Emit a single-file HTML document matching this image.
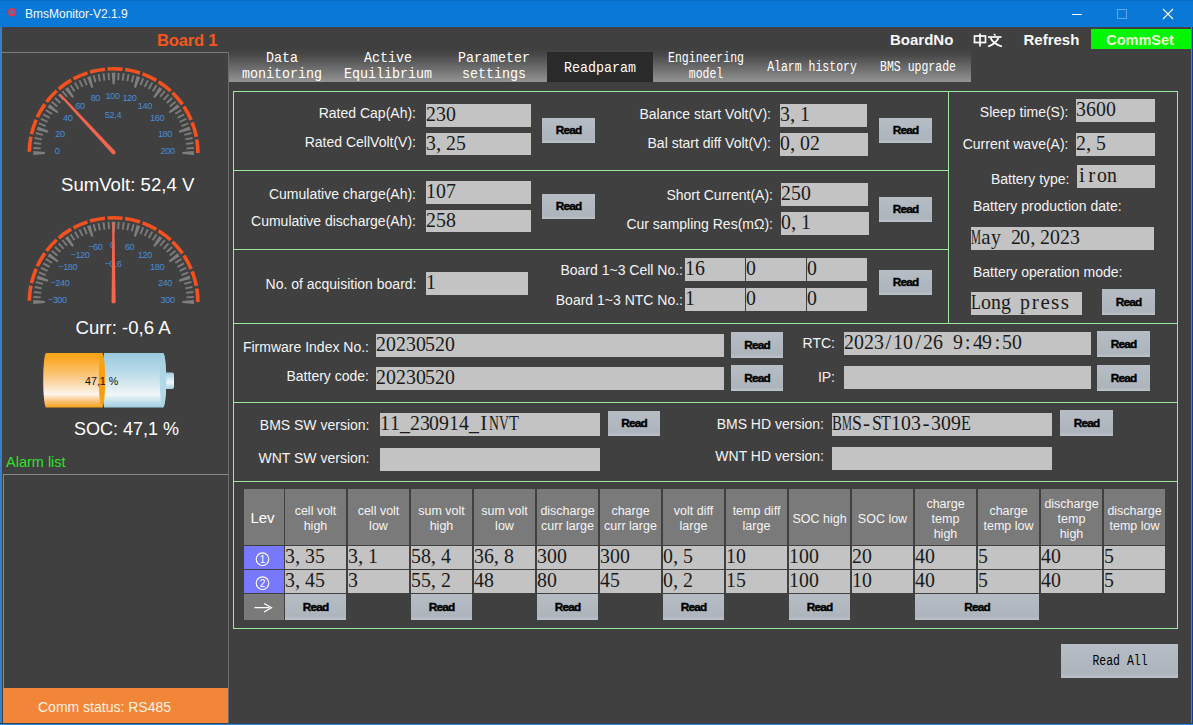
<!DOCTYPE html>
<html><head><meta charset="utf-8"><style>
html,body{margin:0;padding:0;}
body{width:1193px;height:725px;background:#404040;position:relative;overflow:hidden;font-family:'Liberation Sans', sans-serif;}
body>div,body>svg{position:absolute;}
</style></head><body>
<div style="left:0px;top:0px;width:1193px;height:27px;background:#0a78d6;"></div><div style="left:0px;top:0px;width:1193px;height:1px;background:#086cc4;"></div><svg style="left:0;top:0" width="30" height="27"><circle cx="12.1" cy="12.2" r="3.2" fill="#5070b8" stroke="#dc3848" stroke-width="2.1"/></svg><div style="left:25px;top:8.04px;font-size:12px;line-height:12px;font-family:'Liberation Sans', sans-serif;color:#f4f8ff;font-weight:normal;white-space:pre;">BmsMonitor-V2.1.9</div><svg style="left:1060px;top:0" width="130" height="27"><line x1="12" y1="14.5" x2="22" y2="14.5" stroke="#fff" stroke-width="1"/><rect x="57.5" y="9.5" width="9" height="9" fill="none" stroke="#5ea6ec" stroke-width="1"/><path d="M103 9 L113 19 M113 9 L103 19" stroke="#fff" stroke-width="1.1"/></svg><div style="left:0px;top:27px;width:2px;height:698px;background:#3a7fc4;"></div><div style="left:1191px;top:27px;width:1px;height:698px;background:#3f80cc;"></div><div style="left:1192px;top:27px;width:1px;height:698px;background:#0b3d9c;"></div><div style="left:0px;top:723px;width:1193px;height:1px;background:#30445c;"></div><div style="left:0px;top:724px;width:1193px;height:1px;background:#2f86d8;"></div><div style="left:157px;top:33.45px;font-size:16.6px;line-height:16.6px;font-family:'Liberation Sans', sans-serif;color:#f5561e;font-weight:bold;white-space:pre;letter-spacing:-0.2px;">Board 1</div><div style="left:2px;top:52px;width:226px;height:1px;background:#7c7c7c;"></div><div style="left:228px;top:52px;width:1px;height:671px;background:#6c6c6c;"></div><svg style="left:0;top:0" width="229" height="450"><path d="M29.299999999999997 153 A84.3 84.3 0 0 1 197.89999999999998 153" fill="none" stroke="#f4511e" stroke-width="3.6" stroke-dasharray="15.23 2.6" stroke-dashoffset="-1.2"/><polygon points="33.32,151.10 33.32,154.90 44.81,154.00 44.81,152.00" fill="#7e7e7e"/><line x1="40.74" y1="148.42" x2="33.46" y2="147.96" stroke="#7c7c7c" stroke-width="1.9"/><line x1="41.18" y1="143.85" x2="33.93" y2="142.94" stroke="#7c7c7c" stroke-width="1.9"/><line x1="41.89" y1="139.32" x2="34.72" y2="137.95" stroke="#7c7c7c" stroke-width="1.9"/><line x1="42.89" y1="134.85" x2="35.82" y2="133.03" stroke="#7c7c7c" stroke-width="1.9"/><polygon points="37.84,126.39 36.66,130.00 47.87,132.69 48.48,130.79" fill="#7e7e7e"/><line x1="45.73" y1="126.13" x2="38.94" y2="123.44" stroke="#7c7c7c" stroke-width="1.9"/><line x1="47.55" y1="121.92" x2="40.94" y2="118.81" stroke="#7c7c7c" stroke-width="1.9"/><line x1="49.63" y1="117.83" x2="43.23" y2="114.32" stroke="#7c7c7c" stroke-width="1.9"/><line x1="51.96" y1="113.88" x2="45.80" y2="109.97" stroke="#7c7c7c" stroke-width="1.9"/><polygon points="49.77,104.28 47.54,107.35 57.36,113.37 58.53,111.76" fill="#7e7e7e"/><line x1="57.35" y1="106.47" x2="51.73" y2="101.81" stroke="#7c7c7c" stroke-width="1.9"/><line x1="60.39" y1="103.03" x2="55.06" y2="98.03" stroke="#7c7c7c" stroke-width="1.9"/><line x1="63.63" y1="99.79" x2="58.63" y2="94.46" stroke="#7c7c7c" stroke-width="1.9"/><line x1="67.07" y1="96.75" x2="62.41" y2="91.13" stroke="#7c7c7c" stroke-width="1.9"/><polygon points="67.95,86.94 64.88,89.17 72.36,97.93 73.97,96.76" fill="#7e7e7e"/><line x1="74.48" y1="91.36" x2="70.57" y2="85.20" stroke="#7c7c7c" stroke-width="1.9"/><line x1="78.43" y1="89.03" x2="74.92" y2="82.63" stroke="#7c7c7c" stroke-width="1.9"/><line x1="82.52" y1="86.95" x2="79.41" y2="80.34" stroke="#7c7c7c" stroke-width="1.9"/><line x1="86.73" y1="85.13" x2="84.04" y2="78.34" stroke="#7c7c7c" stroke-width="1.9"/><polygon points="90.60,76.06 86.99,77.24 91.39,87.88 93.29,87.27" fill="#7e7e7e"/><line x1="95.45" y1="82.29" x2="93.63" y2="75.22" stroke="#7c7c7c" stroke-width="1.9"/><line x1="99.92" y1="81.29" x2="98.55" y2="74.12" stroke="#7c7c7c" stroke-width="1.9"/><line x1="104.45" y1="80.58" x2="103.54" y2="73.33" stroke="#7c7c7c" stroke-width="1.9"/><line x1="109.02" y1="80.14" x2="108.56" y2="72.86" stroke="#7c7c7c" stroke-width="1.9"/><polygon points="115.50,72.72 111.70,72.72 112.60,84.21 114.60,84.21" fill="#7e7e7e"/><line x1="118.18" y1="80.14" x2="118.64" y2="72.86" stroke="#7c7c7c" stroke-width="1.9"/><line x1="122.75" y1="80.58" x2="123.66" y2="73.33" stroke="#7c7c7c" stroke-width="1.9"/><line x1="127.28" y1="81.29" x2="128.65" y2="74.12" stroke="#7c7c7c" stroke-width="1.9"/><line x1="131.75" y1="82.29" x2="133.57" y2="75.22" stroke="#7c7c7c" stroke-width="1.9"/><polygon points="140.21,77.24 136.60,76.06 133.91,87.27 135.81,87.88" fill="#7e7e7e"/><line x1="140.47" y1="85.13" x2="143.16" y2="78.34" stroke="#7c7c7c" stroke-width="1.9"/><line x1="144.68" y1="86.95" x2="147.79" y2="80.34" stroke="#7c7c7c" stroke-width="1.9"/><line x1="148.77" y1="89.03" x2="152.28" y2="82.63" stroke="#7c7c7c" stroke-width="1.9"/><line x1="152.72" y1="91.36" x2="156.63" y2="85.20" stroke="#7c7c7c" stroke-width="1.9"/><polygon points="162.32,89.17 159.25,86.94 153.23,96.76 154.84,97.93" fill="#7e7e7e"/><line x1="160.13" y1="96.75" x2="164.79" y2="91.13" stroke="#7c7c7c" stroke-width="1.9"/><line x1="163.57" y1="99.79" x2="168.57" y2="94.46" stroke="#7c7c7c" stroke-width="1.9"/><line x1="166.81" y1="103.03" x2="172.14" y2="98.03" stroke="#7c7c7c" stroke-width="1.9"/><line x1="169.85" y1="106.47" x2="175.47" y2="101.81" stroke="#7c7c7c" stroke-width="1.9"/><polygon points="179.66,107.35 177.43,104.28 168.67,111.76 169.84,113.37" fill="#7e7e7e"/><line x1="175.24" y1="113.88" x2="181.40" y2="109.97" stroke="#7c7c7c" stroke-width="1.9"/><line x1="177.57" y1="117.83" x2="183.97" y2="114.32" stroke="#7c7c7c" stroke-width="1.9"/><line x1="179.65" y1="121.92" x2="186.26" y2="118.81" stroke="#7c7c7c" stroke-width="1.9"/><line x1="181.47" y1="126.13" x2="188.26" y2="123.44" stroke="#7c7c7c" stroke-width="1.9"/><polygon points="190.54,130.00 189.36,126.39 178.72,130.79 179.33,132.69" fill="#7e7e7e"/><line x1="184.31" y1="134.85" x2="191.38" y2="133.03" stroke="#7c7c7c" stroke-width="1.9"/><line x1="185.31" y1="139.32" x2="192.48" y2="137.95" stroke="#7c7c7c" stroke-width="1.9"/><line x1="186.02" y1="143.85" x2="193.27" y2="142.94" stroke="#7c7c7c" stroke-width="1.9"/><line x1="186.46" y1="148.42" x2="193.74" y2="147.96" stroke="#7c7c7c" stroke-width="1.9"/><polygon points="193.88,154.90 193.88,151.10 182.39,152.00 182.39,154.00" fill="#7e7e7e"/><text x="57.20" y="153.80" font-size="9.2" letter-spacing="-0.45" text-anchor="middle" fill="#4a8cd8" font-family="'Liberation Sans', sans-serif">0</text><text x="59.90" y="136.74" font-size="9.2" letter-spacing="-0.45" text-anchor="middle" fill="#4a8cd8" font-family="'Liberation Sans', sans-serif">20</text><text x="67.74" y="121.35" font-size="9.2" letter-spacing="-0.45" text-anchor="middle" fill="#4a8cd8" font-family="'Liberation Sans', sans-serif">40</text><text x="79.95" y="109.14" font-size="9.2" letter-spacing="-0.45" text-anchor="middle" fill="#4a8cd8" font-family="'Liberation Sans', sans-serif">60</text><text x="95.34" y="101.30" font-size="9.2" letter-spacing="-0.45" text-anchor="middle" fill="#4a8cd8" font-family="'Liberation Sans', sans-serif">80</text><text x="112.40" y="98.60" font-size="9.2" letter-spacing="-0.45" text-anchor="middle" fill="#4a8cd8" font-family="'Liberation Sans', sans-serif">100</text><text x="129.46" y="101.30" font-size="9.2" letter-spacing="-0.45" text-anchor="middle" fill="#4a8cd8" font-family="'Liberation Sans', sans-serif">120</text><text x="144.85" y="109.14" font-size="9.2" letter-spacing="-0.45" text-anchor="middle" fill="#4a8cd8" font-family="'Liberation Sans', sans-serif">140</text><text x="157.06" y="121.35" font-size="9.2" letter-spacing="-0.45" text-anchor="middle" fill="#4a8cd8" font-family="'Liberation Sans', sans-serif">160</text><text x="164.90" y="136.74" font-size="9.2" letter-spacing="-0.45" text-anchor="middle" fill="#4a8cd8" font-family="'Liberation Sans', sans-serif">180</text><text x="167.60" y="153.80" font-size="9.2" letter-spacing="-0.45" text-anchor="middle" fill="#4a8cd8" font-family="'Liberation Sans', sans-serif">200</text><text x="113.0" y="117.70" font-size="9.2" letter-spacing="-0.45" text-anchor="middle" fill="#4a8cd8" font-family="'Liberation Sans', sans-serif">52,&#8202;4</text><polygon points="112.13,153.76 59.15,95.15 60.62,93.79 115.07,151.04" fill="#f2654e"/><circle cx="113.6" cy="152.4" r="2.0" fill="#f2654e"/><path d="M29.299999999999997 302 A84.3 84.3 0 0 1 197.89999999999998 302" fill="none" stroke="#f4511e" stroke-width="3.6" stroke-dasharray="15.23 2.6" stroke-dashoffset="-1.2"/><polygon points="33.32,300.10 33.32,303.90 44.81,303.00 44.81,301.00" fill="#7e7e7e"/><line x1="40.74" y1="297.42" x2="33.46" y2="296.96" stroke="#7c7c7c" stroke-width="1.9"/><line x1="41.18" y1="292.85" x2="33.93" y2="291.94" stroke="#7c7c7c" stroke-width="1.9"/><line x1="41.89" y1="288.32" x2="34.72" y2="286.95" stroke="#7c7c7c" stroke-width="1.9"/><line x1="42.89" y1="283.85" x2="35.82" y2="282.03" stroke="#7c7c7c" stroke-width="1.9"/><polygon points="37.84,275.39 36.66,279.00 47.87,281.69 48.48,279.79" fill="#7e7e7e"/><line x1="45.73" y1="275.13" x2="38.94" y2="272.44" stroke="#7c7c7c" stroke-width="1.9"/><line x1="47.55" y1="270.92" x2="40.94" y2="267.81" stroke="#7c7c7c" stroke-width="1.9"/><line x1="49.63" y1="266.83" x2="43.23" y2="263.32" stroke="#7c7c7c" stroke-width="1.9"/><line x1="51.96" y1="262.88" x2="45.80" y2="258.97" stroke="#7c7c7c" stroke-width="1.9"/><polygon points="49.77,253.28 47.54,256.35 57.36,262.37 58.53,260.76" fill="#7e7e7e"/><line x1="57.35" y1="255.47" x2="51.73" y2="250.81" stroke="#7c7c7c" stroke-width="1.9"/><line x1="60.39" y1="252.03" x2="55.06" y2="247.03" stroke="#7c7c7c" stroke-width="1.9"/><line x1="63.63" y1="248.79" x2="58.63" y2="243.46" stroke="#7c7c7c" stroke-width="1.9"/><line x1="67.07" y1="245.75" x2="62.41" y2="240.13" stroke="#7c7c7c" stroke-width="1.9"/><polygon points="67.95,235.94 64.88,238.17 72.36,246.93 73.97,245.76" fill="#7e7e7e"/><line x1="74.48" y1="240.36" x2="70.57" y2="234.20" stroke="#7c7c7c" stroke-width="1.9"/><line x1="78.43" y1="238.03" x2="74.92" y2="231.63" stroke="#7c7c7c" stroke-width="1.9"/><line x1="82.52" y1="235.95" x2="79.41" y2="229.34" stroke="#7c7c7c" stroke-width="1.9"/><line x1="86.73" y1="234.13" x2="84.04" y2="227.34" stroke="#7c7c7c" stroke-width="1.9"/><polygon points="90.60,225.06 86.99,226.24 91.39,236.88 93.29,236.27" fill="#7e7e7e"/><line x1="95.45" y1="231.29" x2="93.63" y2="224.22" stroke="#7c7c7c" stroke-width="1.9"/><line x1="99.92" y1="230.29" x2="98.55" y2="223.12" stroke="#7c7c7c" stroke-width="1.9"/><line x1="104.45" y1="229.58" x2="103.54" y2="222.33" stroke="#7c7c7c" stroke-width="1.9"/><line x1="109.02" y1="229.14" x2="108.56" y2="221.86" stroke="#7c7c7c" stroke-width="1.9"/><polygon points="115.50,221.72 111.70,221.72 112.60,233.21 114.60,233.21" fill="#7e7e7e"/><line x1="118.18" y1="229.14" x2="118.64" y2="221.86" stroke="#7c7c7c" stroke-width="1.9"/><line x1="122.75" y1="229.58" x2="123.66" y2="222.33" stroke="#7c7c7c" stroke-width="1.9"/><line x1="127.28" y1="230.29" x2="128.65" y2="223.12" stroke="#7c7c7c" stroke-width="1.9"/><line x1="131.75" y1="231.29" x2="133.57" y2="224.22" stroke="#7c7c7c" stroke-width="1.9"/><polygon points="140.21,226.24 136.60,225.06 133.91,236.27 135.81,236.88" fill="#7e7e7e"/><line x1="140.47" y1="234.13" x2="143.16" y2="227.34" stroke="#7c7c7c" stroke-width="1.9"/><line x1="144.68" y1="235.95" x2="147.79" y2="229.34" stroke="#7c7c7c" stroke-width="1.9"/><line x1="148.77" y1="238.03" x2="152.28" y2="231.63" stroke="#7c7c7c" stroke-width="1.9"/><line x1="152.72" y1="240.36" x2="156.63" y2="234.20" stroke="#7c7c7c" stroke-width="1.9"/><polygon points="162.32,238.17 159.25,235.94 153.23,245.76 154.84,246.93" fill="#7e7e7e"/><line x1="160.13" y1="245.75" x2="164.79" y2="240.13" stroke="#7c7c7c" stroke-width="1.9"/><line x1="163.57" y1="248.79" x2="168.57" y2="243.46" stroke="#7c7c7c" stroke-width="1.9"/><line x1="166.81" y1="252.03" x2="172.14" y2="247.03" stroke="#7c7c7c" stroke-width="1.9"/><line x1="169.85" y1="255.47" x2="175.47" y2="250.81" stroke="#7c7c7c" stroke-width="1.9"/><polygon points="179.66,256.35 177.43,253.28 168.67,260.76 169.84,262.37" fill="#7e7e7e"/><line x1="175.24" y1="262.88" x2="181.40" y2="258.97" stroke="#7c7c7c" stroke-width="1.9"/><line x1="177.57" y1="266.83" x2="183.97" y2="263.32" stroke="#7c7c7c" stroke-width="1.9"/><line x1="179.65" y1="270.92" x2="186.26" y2="267.81" stroke="#7c7c7c" stroke-width="1.9"/><line x1="181.47" y1="275.13" x2="188.26" y2="272.44" stroke="#7c7c7c" stroke-width="1.9"/><polygon points="190.54,279.00 189.36,275.39 178.72,279.79 179.33,281.69" fill="#7e7e7e"/><line x1="184.31" y1="283.85" x2="191.38" y2="282.03" stroke="#7c7c7c" stroke-width="1.9"/><line x1="185.31" y1="288.32" x2="192.48" y2="286.95" stroke="#7c7c7c" stroke-width="1.9"/><line x1="186.02" y1="292.85" x2="193.27" y2="291.94" stroke="#7c7c7c" stroke-width="1.9"/><line x1="186.46" y1="297.42" x2="193.74" y2="296.96" stroke="#7c7c7c" stroke-width="1.9"/><polygon points="193.88,303.90 193.88,300.10 182.39,301.00 182.39,303.00" fill="#7e7e7e"/><text x="57.20" y="302.80" font-size="9.2" letter-spacing="-0.45" text-anchor="middle" fill="#4a8cd8" font-family="'Liberation Sans', sans-serif">&#8722;300</text><text x="59.90" y="285.74" font-size="9.2" letter-spacing="-0.45" text-anchor="middle" fill="#4a8cd8" font-family="'Liberation Sans', sans-serif">&#8722;240</text><text x="67.74" y="270.35" font-size="9.2" letter-spacing="-0.45" text-anchor="middle" fill="#4a8cd8" font-family="'Liberation Sans', sans-serif">&#8722;180</text><text x="79.95" y="258.14" font-size="9.2" letter-spacing="-0.45" text-anchor="middle" fill="#4a8cd8" font-family="'Liberation Sans', sans-serif">&#8722;120</text><text x="95.34" y="250.30" font-size="9.2" letter-spacing="-0.45" text-anchor="middle" fill="#4a8cd8" font-family="'Liberation Sans', sans-serif">&#8722;60</text><text x="112.40" y="247.60" font-size="9.2" letter-spacing="-0.45" text-anchor="middle" fill="#4a8cd8" font-family="'Liberation Sans', sans-serif">0</text><text x="129.46" y="250.30" font-size="9.2" letter-spacing="-0.45" text-anchor="middle" fill="#4a8cd8" font-family="'Liberation Sans', sans-serif">60</text><text x="144.85" y="258.14" font-size="9.2" letter-spacing="-0.45" text-anchor="middle" fill="#4a8cd8" font-family="'Liberation Sans', sans-serif">120</text><text x="157.06" y="270.35" font-size="9.2" letter-spacing="-0.45" text-anchor="middle" fill="#4a8cd8" font-family="'Liberation Sans', sans-serif">180</text><text x="164.90" y="285.74" font-size="9.2" letter-spacing="-0.45" text-anchor="middle" fill="#4a8cd8" font-family="'Liberation Sans', sans-serif">240</text><text x="167.60" y="302.80" font-size="9.2" letter-spacing="-0.45" text-anchor="middle" fill="#4a8cd8" font-family="'Liberation Sans', sans-serif">300</text><text x="113.0" y="266.70" font-size="9.2" letter-spacing="-0.45" text-anchor="middle" fill="#4a8cd8" font-family="'Liberation Sans', sans-serif">&#8722;0,&#8202;6</text><polygon points="111.60,301.41 112.35,222.40 114.35,222.40 115.60,301.39" fill="#f2654e"/><circle cx="113.6" cy="301.4" r="2.0" fill="#f2654e"/></svg><div style="left:61px;top:176.46px;font-size:18.6px;line-height:18.6px;font-family:'Liberation Sans', sans-serif;color:#fff;font-weight:normal;white-space:pre;">SumVolt: 52,4 V</div><div style="left:75.5px;top:319.36px;font-size:18.6px;line-height:18.6px;font-family:'Liberation Sans', sans-serif;color:#fff;font-weight:normal;white-space:pre;">Curr: -0,6 A</div><svg style="left:0;top:340px" width="229" height="80">
<defs>
<linearGradient id="og" x1="0" y1="0" x2="0" y2="1">
<stop offset="0" stop-color="#faa518"/><stop offset="0.12" stop-color="#faaa28"/><stop offset="0.45" stop-color="#fbcb88"/><stop offset="0.76" stop-color="#fdf6ee"/><stop offset="0.88" stop-color="#f9c27a"/><stop offset="1" stop-color="#f6a21a"/></linearGradient>
<linearGradient id="bg2" x1="0" y1="0" x2="0" y2="1">
<stop offset="0" stop-color="#98cadf"/><stop offset="0.4" stop-color="#bfdde9"/><stop offset="0.76" stop-color="#f1f6f8"/><stop offset="0.88" stop-color="#c9e3ee"/><stop offset="1" stop-color="#9fcee1"/></linearGradient>
<linearGradient id="tg" x1="0" y1="0" x2="0" y2="1">
<stop offset="0" stop-color="#9fcfe2"/><stop offset="0.6" stop-color="#eef6f9"/><stop offset="1" stop-color="#a4d1e3"/></linearGradient>
</defs>
<rect x="162" y="32.5" width="12" height="16.5" rx="2" fill="url(#tg)"/>
<rect x="161" y="32.5" width="4" height="16.5" fill="#8ec4da"/>
<path d="M104 13 H163 A3.5 27.3 0 0 1 163 67.5 H104 Z" fill="url(#bg2)"/>
<ellipse cx="163" cy="40.25" rx="3.2" ry="27.2" fill="#a8d3e4" opacity="0.8"/>
<path d="M46 13 H102 A3 27.3 0 0 1 102 67.5 H46 A3 27.3 0 0 1 46 13 Z" fill="url(#og)"/>
<ellipse cx="102" cy="40.25" rx="3.2" ry="27.2" fill="#f6a114"/>
</svg><div style="left:85px;top:376.44px;font-size:10.7px;line-height:10.7px;font-family:'Liberation Sans', sans-serif;color:#111;font-weight:normal;white-space:pre;">47,1 %</div><div style="left:74px;top:419.56px;font-size:18px;line-height:18px;font-family:'Liberation Sans', sans-serif;color:#fff;font-weight:normal;white-space:pre;">SOC: 47,1 %</div><div style="left:6px;top:454.93px;font-size:14.5px;line-height:14.5px;font-family:'Liberation Sans', sans-serif;color:#2fe02f;font-weight:normal;white-space:pre;">Alarm list</div><div style="left:3px;top:474px;width:225px;height:1px;background:#8a8a8a;"></div><div style="left:3px;top:474px;width:1px;height:249px;background:#8a8a8a;"></div><div style="left:3px;top:688px;width:225px;height:35px;background:#f18638;"></div><div style="left:38px;top:700.15px;font-size:14px;line-height:14px;font-family:'Liberation Sans', sans-serif;color:#fff3e3;font-weight:normal;white-space:pre;">Comm status: RS485</div><div style="left:890px;top:32.10px;font-size:15px;line-height:15px;font-family:'Liberation Sans', sans-serif;color:#f8f8f8;font-weight:bold;white-space:pre;">BoardNo</div><svg style="left:970px;top:30px" width="36" height="20"><g stroke="#fff" stroke-width="1.7" fill="none"><rect x="4.5" y="6" width="11" height="6.5"/><line x1="10" y1="3.5" x2="10" y2="16.5"/><line x1="24" y1="4" x2="25.5" y2="5.5"/><line x1="18" y1="7" x2="31.5" y2="7"/><path d="M20.5 8 Q23.5 14 32 16.5"/><path d="M28.5 8 Q25.5 14 18 16.5"/></g></svg><div style="left:1023.5px;top:32.30px;font-size:15px;line-height:15px;font-family:'Liberation Sans', sans-serif;color:#f8f8f8;font-weight:bold;white-space:pre;">Refresh</div><div style="left:1091px;top:29px;width:100px;height:20px;background:#02f502;"></div><div style="left:840px;width:600px;text-align:center;top:32.93px;font-size:14.5px;line-height:14.5px;font-family:'Liberation Sans', sans-serif;color:#eaffd2;font-weight:bold;white-space:pre;">CommSet</div><div style="left:229px;top:50px;width:742px;height:32px;background:linear-gradient(#424242,#484848 15%,#939393)"></div><div style="left:547px;top:52px;width:106px;height:30px;background:#2a2a2a;"></div><div style="left:-18px;width:600px;text-align:center;top:50.50px;font-size:15px;line-height:15px;font-family:'Liberation Mono', monospace;color:#fff;font-weight:normal;white-space:pre;transform:scaleX(0.889);">Data</div><div style="left:-18px;width:600px;text-align:center;top:66.50px;font-size:15px;line-height:15px;font-family:'Liberation Mono', monospace;color:#fff;font-weight:normal;white-space:pre;transform:scaleX(0.889);">monitoring</div><div style="left:88px;width:600px;text-align:center;top:50.50px;font-size:15px;line-height:15px;font-family:'Liberation Mono', monospace;color:#fff;font-weight:normal;white-space:pre;transform:scaleX(0.889);">Active</div><div style="left:88px;width:600px;text-align:center;top:66.50px;font-size:15px;line-height:15px;font-family:'Liberation Mono', monospace;color:#fff;font-weight:normal;white-space:pre;transform:scaleX(0.889);">Equilibrium</div><div style="left:194px;width:600px;text-align:center;top:50.50px;font-size:15px;line-height:15px;font-family:'Liberation Mono', monospace;color:#fff;font-weight:normal;white-space:pre;transform:scaleX(0.889);">Parameter</div><div style="left:194px;width:600px;text-align:center;top:66.50px;font-size:15px;line-height:15px;font-family:'Liberation Mono', monospace;color:#fff;font-weight:normal;white-space:pre;transform:scaleX(0.889);">settings</div><div style="left:300px;width:600px;text-align:center;top:60.70px;font-size:15px;line-height:15px;font-family:'Liberation Mono', monospace;color:#fff;font-weight:normal;white-space:pre;transform:scaleX(0.889);">Readparam</div><div style="left:406px;width:600px;text-align:center;top:51.27px;font-size:14px;line-height:14px;font-family:'Liberation Mono', monospace;color:#fff;font-weight:normal;white-space:pre;transform:scaleX(0.821);">Engineering</div><div style="left:406px;width:600px;text-align:center;top:67.27px;font-size:14px;line-height:14px;font-family:'Liberation Mono', monospace;color:#fff;font-weight:normal;white-space:pre;transform:scaleX(0.821);">model</div><div style="left:512px;width:600px;text-align:center;top:60.17px;font-size:14px;line-height:14px;font-family:'Liberation Mono', monospace;color:#fff;font-weight:normal;white-space:pre;transform:scaleX(0.821);">Alarm history</div><div style="left:618px;width:600px;text-align:center;top:60.17px;font-size:14px;line-height:14px;font-family:'Liberation Mono', monospace;color:#fff;font-weight:normal;white-space:pre;transform:scaleX(0.821);">BMS upgrade</div><div style="left:233px;top:91px;width:945px;height:1px;background:#9ce89c;"></div><div style="left:233px;top:628px;width:945px;height:1px;background:#9ce89c;"></div><div style="left:233px;top:91px;width:1px;height:538px;background:#9ce89c;"></div><div style="left:1177px;top:91px;width:1px;height:538px;background:#9ce89c;"></div><div style="left:233px;top:170px;width:716px;height:1px;background:#9ce89c;"></div><div style="left:233px;top:249px;width:716px;height:1px;background:#9ce89c;"></div><div style="left:948px;top:91px;width:1px;height:233px;background:#9ce89c;"></div><div style="left:233px;top:323px;width:945px;height:1px;background:#9ce89c;"></div><div style="left:233px;top:402px;width:945px;height:1px;background:#9ce89c;"></div><div style="left:233px;top:481px;width:945px;height:1px;background:#9ce89c;"></div><div style="right:777px;text-align:right;top:106.15px;font-size:14px;line-height:14px;font-family:'Liberation Sans', sans-serif;color:#f4f4f4;font-weight:normal;white-space:pre;">Rated Cap(Ah):</div><div style="right:777px;text-align:right;top:135.15px;font-size:14px;line-height:14px;font-family:'Liberation Sans', sans-serif;color:#f4f4f4;font-weight:normal;white-space:pre;">Rated CellVolt(V):</div><div style="left:426px;top:104px;width:105px;height:23px;background:#c3c3c3;"></div><div style="left:426px;top:104.21px;font-size:21px;line-height:21px;font-family:'Liberation Serif', serif;color:#1a1a1a;font-weight:normal;white-space:pre;"><span style="display:inline-block;width:9.9px;"><span style="display:inline-block;transform:scaleX(0.943);transform-origin:0 0;">2</span></span><span style="display:inline-block;width:9.9px;"><span style="display:inline-block;transform:scaleX(0.943);transform-origin:0 0;">3</span></span><span style="display:inline-block;width:9.9px;"><span style="display:inline-block;transform:scaleX(0.943);transform-origin:0 0;">0</span></span></div><div style="left:426px;top:133px;width:105px;height:22px;background:#c3c3c3;"></div><div style="left:426px;top:133.21px;font-size:21px;line-height:21px;font-family:'Liberation Serif', serif;color:#1a1a1a;font-weight:normal;white-space:pre;"><span style="display:inline-block;width:9.9px;"><span style="display:inline-block;transform:scaleX(0.943);transform-origin:0 0;">3</span></span><span style="display:inline-block;width:9.9px;text-align:left">,</span><span style="display:inline-block;width:9.9px;"><span style="display:inline-block;transform:scaleX(0.943);transform-origin:0 0;">2</span></span><span style="display:inline-block;width:9.9px;"><span style="display:inline-block;transform:scaleX(0.943);transform-origin:0 0;">5</span></span></div><div style="left:542px;top:118px;width:53px;height:25px;background:linear-gradient(#b7bdc5,#adb4bc 85%,#bcc2ca)"></div><div style="left:268.5px;width:600px;text-align:center;top:125.11px;font-size:11.8px;line-height:11.8px;font-family:'Liberation Sans', sans-serif;color:#000;font-weight:bold;white-space:pre;letter-spacing:-0.8px;-webkit-text-stroke:0.4px #000;">Read</div><div style="right:422px;text-align:right;top:107.15px;font-size:14px;line-height:14px;font-family:'Liberation Sans', sans-serif;color:#f4f4f4;font-weight:normal;white-space:pre;">Balance start Volt(V):</div><div style="right:422px;text-align:right;top:136.15px;font-size:14px;line-height:14px;font-family:'Liberation Sans', sans-serif;color:#f4f4f4;font-weight:normal;white-space:pre;">Bal start diff Volt(V):</div><div style="left:780px;top:104px;width:87px;height:23px;background:#c3c3c3;"></div><div style="left:780px;top:104.21px;font-size:21px;line-height:21px;font-family:'Liberation Serif', serif;color:#1a1a1a;font-weight:normal;white-space:pre;"><span style="display:inline-block;width:9.9px;"><span style="display:inline-block;transform:scaleX(0.943);transform-origin:0 0;">3</span></span><span style="display:inline-block;width:9.9px;text-align:left">,</span><span style="display:inline-block;width:9.9px;"><span style="display:inline-block;transform:scaleX(0.943);transform-origin:0 0;">1</span></span></div><div style="left:780px;top:133px;width:88px;height:23px;background:#c3c3c3;"></div><div style="left:780px;top:133.21px;font-size:21px;line-height:21px;font-family:'Liberation Serif', serif;color:#1a1a1a;font-weight:normal;white-space:pre;"><span style="display:inline-block;width:9.9px;"><span style="display:inline-block;transform:scaleX(0.943);transform-origin:0 0;">0</span></span><span style="display:inline-block;width:9.9px;text-align:left">,</span><span style="display:inline-block;width:9.9px;"><span style="display:inline-block;transform:scaleX(0.943);transform-origin:0 0;">0</span></span><span style="display:inline-block;width:9.9px;"><span style="display:inline-block;transform:scaleX(0.943);transform-origin:0 0;">2</span></span></div><div style="left:879px;top:118px;width:53px;height:25px;background:linear-gradient(#b7bdc5,#adb4bc 85%,#bcc2ca)"></div><div style="left:605.5px;width:600px;text-align:center;top:125.11px;font-size:11.8px;line-height:11.8px;font-family:'Liberation Sans', sans-serif;color:#000;font-weight:bold;white-space:pre;letter-spacing:-0.8px;-webkit-text-stroke:0.4px #000;">Read</div><div style="right:777px;text-align:right;top:186.65px;font-size:14px;line-height:14px;font-family:'Liberation Sans', sans-serif;color:#f4f4f4;font-weight:normal;white-space:pre;">Cumulative charge(Ah):</div><div style="right:777px;text-align:right;top:214.15px;font-size:14px;line-height:14px;font-family:'Liberation Sans', sans-serif;color:#f4f4f4;font-weight:normal;white-space:pre;">Cumulative discharge(Ah):</div><div style="left:426px;top:181px;width:105px;height:23px;background:#c3c3c3;"></div><div style="left:426px;top:181.21px;font-size:21px;line-height:21px;font-family:'Liberation Serif', serif;color:#1a1a1a;font-weight:normal;white-space:pre;"><span style="display:inline-block;width:9.9px;"><span style="display:inline-block;transform:scaleX(0.943);transform-origin:0 0;">1</span></span><span style="display:inline-block;width:9.9px;"><span style="display:inline-block;transform:scaleX(0.943);transform-origin:0 0;">0</span></span><span style="display:inline-block;width:9.9px;"><span style="display:inline-block;transform:scaleX(0.943);transform-origin:0 0;">7</span></span></div><div style="left:426px;top:210px;width:105px;height:22px;background:#c3c3c3;"></div><div style="left:426px;top:210.21px;font-size:21px;line-height:21px;font-family:'Liberation Serif', serif;color:#1a1a1a;font-weight:normal;white-space:pre;"><span style="display:inline-block;width:9.9px;"><span style="display:inline-block;transform:scaleX(0.943);transform-origin:0 0;">2</span></span><span style="display:inline-block;width:9.9px;"><span style="display:inline-block;transform:scaleX(0.943);transform-origin:0 0;">5</span></span><span style="display:inline-block;width:9.9px;"><span style="display:inline-block;transform:scaleX(0.943);transform-origin:0 0;">8</span></span></div><div style="left:542px;top:194px;width:53px;height:25px;background:linear-gradient(#b7bdc5,#adb4bc 85%,#bcc2ca)"></div><div style="left:268.5px;width:600px;text-align:center;top:201.11px;font-size:11.8px;line-height:11.8px;font-family:'Liberation Sans', sans-serif;color:#000;font-weight:bold;white-space:pre;letter-spacing:-0.8px;-webkit-text-stroke:0.4px #000;">Read</div><div style="right:420px;text-align:right;top:187.65px;font-size:14px;line-height:14px;font-family:'Liberation Sans', sans-serif;color:#f4f4f4;font-weight:normal;white-space:pre;">Short Current(A):</div><div style="right:420px;text-align:right;top:216.65px;font-size:14px;line-height:14px;font-family:'Liberation Sans', sans-serif;color:#f4f4f4;font-weight:normal;white-space:pre;">Cur sampling Res(m&Omega;):</div><div style="left:781px;top:183px;width:87px;height:23px;background:#c3c3c3;"></div><div style="left:781px;top:183.21px;font-size:21px;line-height:21px;font-family:'Liberation Serif', serif;color:#1a1a1a;font-weight:normal;white-space:pre;"><span style="display:inline-block;width:9.9px;"><span style="display:inline-block;transform:scaleX(0.943);transform-origin:0 0;">2</span></span><span style="display:inline-block;width:9.9px;"><span style="display:inline-block;transform:scaleX(0.943);transform-origin:0 0;">5</span></span><span style="display:inline-block;width:9.9px;"><span style="display:inline-block;transform:scaleX(0.943);transform-origin:0 0;">0</span></span></div><div style="left:781px;top:212px;width:88px;height:23px;background:#c3c3c3;"></div><div style="left:781px;top:212.21px;font-size:21px;line-height:21px;font-family:'Liberation Serif', serif;color:#1a1a1a;font-weight:normal;white-space:pre;"><span style="display:inline-block;width:9.9px;"><span style="display:inline-block;transform:scaleX(0.943);transform-origin:0 0;">0</span></span><span style="display:inline-block;width:9.9px;text-align:left">,</span><span style="display:inline-block;width:9.9px;"><span style="display:inline-block;transform:scaleX(0.943);transform-origin:0 0;">1</span></span></div><div style="left:879px;top:197px;width:53px;height:25px;background:linear-gradient(#b7bdc5,#adb4bc 85%,#bcc2ca)"></div><div style="left:605.5px;width:600px;text-align:center;top:204.11px;font-size:11.8px;line-height:11.8px;font-family:'Liberation Sans', sans-serif;color:#000;font-weight:bold;white-space:pre;letter-spacing:-0.8px;-webkit-text-stroke:0.4px #000;">Read</div><div style="right:776.5px;text-align:right;top:277.15px;font-size:14px;line-height:14px;font-family:'Liberation Sans', sans-serif;color:#f4f4f4;font-weight:normal;white-space:pre;">No. of acquisition board:</div><div style="left:426px;top:272px;width:102px;height:23px;background:#c3c3c3;"></div><div style="left:426px;top:272.21px;font-size:21px;line-height:21px;font-family:'Liberation Serif', serif;color:#1a1a1a;font-weight:normal;white-space:pre;"><span style="display:inline-block;width:9.9px;"><span style="display:inline-block;transform:scaleX(0.943);transform-origin:0 0;">1</span></span></div><div style="right:510px;text-align:right;top:263.15px;font-size:14px;line-height:14px;font-family:'Liberation Sans', sans-serif;color:#f4f4f4;font-weight:normal;white-space:pre;">Board 1~3 Cell No.:</div><div style="right:510px;text-align:right;top:293.15px;font-size:14px;line-height:14px;font-family:'Liberation Sans', sans-serif;color:#f4f4f4;font-weight:normal;white-space:pre;">Board 1~3 NTC No.:</div><div style="left:685px;top:258px;width:60px;height:23px;background:#c3c3c3;"></div><div style="left:685px;top:258.21px;font-size:21px;line-height:21px;font-family:'Liberation Serif', serif;color:#1a1a1a;font-weight:normal;white-space:pre;"><span style="display:inline-block;width:9.9px;"><span style="display:inline-block;transform:scaleX(0.943);transform-origin:0 0;">1</span></span><span style="display:inline-block;width:9.9px;"><span style="display:inline-block;transform:scaleX(0.943);transform-origin:0 0;">6</span></span></div><div style="left:746px;top:258px;width:60px;height:23px;background:#c3c3c3;"></div><div style="left:746px;top:258.21px;font-size:21px;line-height:21px;font-family:'Liberation Serif', serif;color:#1a1a1a;font-weight:normal;white-space:pre;"><span style="display:inline-block;width:9.9px;"><span style="display:inline-block;transform:scaleX(0.943);transform-origin:0 0;">0</span></span></div><div style="left:807px;top:258px;width:60px;height:23px;background:#c3c3c3;"></div><div style="left:807px;top:258.21px;font-size:21px;line-height:21px;font-family:'Liberation Serif', serif;color:#1a1a1a;font-weight:normal;white-space:pre;"><span style="display:inline-block;width:9.9px;"><span style="display:inline-block;transform:scaleX(0.943);transform-origin:0 0;">0</span></span></div><div style="left:685px;top:288px;width:60px;height:23px;background:#c3c3c3;"></div><div style="left:685px;top:288.21px;font-size:21px;line-height:21px;font-family:'Liberation Serif', serif;color:#1a1a1a;font-weight:normal;white-space:pre;"><span style="display:inline-block;width:9.9px;"><span style="display:inline-block;transform:scaleX(0.943);transform-origin:0 0;">1</span></span></div><div style="left:746px;top:288px;width:60px;height:23px;background:#c3c3c3;"></div><div style="left:746px;top:288.21px;font-size:21px;line-height:21px;font-family:'Liberation Serif', serif;color:#1a1a1a;font-weight:normal;white-space:pre;"><span style="display:inline-block;width:9.9px;"><span style="display:inline-block;transform:scaleX(0.943);transform-origin:0 0;">0</span></span></div><div style="left:807px;top:288px;width:60px;height:23px;background:#c3c3c3;"></div><div style="left:807px;top:288.21px;font-size:21px;line-height:21px;font-family:'Liberation Serif', serif;color:#1a1a1a;font-weight:normal;white-space:pre;"><span style="display:inline-block;width:9.9px;"><span style="display:inline-block;transform:scaleX(0.943);transform-origin:0 0;">0</span></span></div><div style="left:879px;top:270px;width:53px;height:25px;background:linear-gradient(#b7bdc5,#adb4bc 85%,#bcc2ca)"></div><div style="left:605.5px;width:600px;text-align:center;top:277.11px;font-size:11.8px;line-height:11.8px;font-family:'Liberation Sans', sans-serif;color:#000;font-weight:bold;white-space:pre;letter-spacing:-0.8px;-webkit-text-stroke:0.4px #000;">Read</div><div style="right:124.5px;text-align:right;top:105.15px;font-size:14px;line-height:14px;font-family:'Liberation Sans', sans-serif;color:#f4f4f4;font-weight:normal;white-space:pre;">Sleep time(S):</div><div style="right:124.5px;text-align:right;top:137.15px;font-size:14px;line-height:14px;font-family:'Liberation Sans', sans-serif;color:#f4f4f4;font-weight:normal;white-space:pre;">Current wave(A):</div><div style="right:123.5px;text-align:right;top:171.65px;font-size:14px;line-height:14px;font-family:'Liberation Sans', sans-serif;color:#f4f4f4;font-weight:normal;white-space:pre;">Battery type:</div><div style="left:1076px;top:99px;width:79px;height:23px;background:#c3c3c3;"></div><div style="left:1076px;top:99.21px;font-size:21px;line-height:21px;font-family:'Liberation Serif', serif;color:#1a1a1a;font-weight:normal;white-space:pre;"><span style="display:inline-block;width:9.9px;"><span style="display:inline-block;transform:scaleX(0.943);transform-origin:0 0;">3</span></span><span style="display:inline-block;width:9.9px;"><span style="display:inline-block;transform:scaleX(0.943);transform-origin:0 0;">6</span></span><span style="display:inline-block;width:9.9px;"><span style="display:inline-block;transform:scaleX(0.943);transform-origin:0 0;">0</span></span><span style="display:inline-block;width:9.9px;"><span style="display:inline-block;transform:scaleX(0.943);transform-origin:0 0;">0</span></span></div><div style="left:1076px;top:133px;width:79px;height:23px;background:#c3c3c3;"></div><div style="left:1076px;top:133.21px;font-size:21px;line-height:21px;font-family:'Liberation Serif', serif;color:#1a1a1a;font-weight:normal;white-space:pre;"><span style="display:inline-block;width:9.9px;"><span style="display:inline-block;transform:scaleX(0.943);transform-origin:0 0;">2</span></span><span style="display:inline-block;width:9.9px;text-align:left">,</span><span style="display:inline-block;width:9.9px;"><span style="display:inline-block;transform:scaleX(0.943);transform-origin:0 0;">5</span></span></div><div style="left:1077px;top:165px;width:78px;height:23px;background:#c3c3c3;"></div><div style="left:1077px;top:165.21px;font-size:21px;line-height:21px;font-family:'Liberation Serif', serif;color:#1a1a1a;font-weight:normal;white-space:pre;"><span style="display:inline-block;width:9.9px;text-align:center">i</span><span style="display:inline-block;width:9.9px;text-align:center">r</span><span style="display:inline-block;width:9.9px;"><span style="display:inline-block;transform:scaleX(0.943);transform-origin:0 0;">o</span></span><span style="display:inline-block;width:9.9px;"><span style="display:inline-block;transform:scaleX(0.943);transform-origin:0 0;">n</span></span></div><div style="left:973px;top:199.15px;font-size:14px;line-height:14px;font-family:'Liberation Sans', sans-serif;color:#f4f4f4;font-weight:normal;white-space:pre;">Battery production date:</div><div style="left:971px;top:227px;width:183px;height:23px;background:#c3c3c3;"></div><div style="left:971px;top:227.21px;font-size:21px;line-height:21px;font-family:'Liberation Serif', serif;color:#1a1a1a;font-weight:normal;white-space:pre;"><span style="display:inline-block;width:9.9px;"><span style="display:inline-block;transform:scaleX(0.530);transform-origin:0 0;">M</span></span><span style="display:inline-block;width:9.9px;text-align:center">a</span><span style="display:inline-block;width:9.9px;"><span style="display:inline-block;transform:scaleX(0.943);transform-origin:0 0;">y</span></span><span style="display:inline-block;width:9.9px"></span><span style="display:inline-block;width:9.9px;"><span style="display:inline-block;transform:scaleX(0.943);transform-origin:0 0;">2</span></span><span style="display:inline-block;width:9.9px;"><span style="display:inline-block;transform:scaleX(0.943);transform-origin:0 0;">0</span></span><span style="display:inline-block;width:9.9px;text-align:left">,</span><span style="display:inline-block;width:9.9px;"><span style="display:inline-block;transform:scaleX(0.943);transform-origin:0 0;">2</span></span><span style="display:inline-block;width:9.9px;"><span style="display:inline-block;transform:scaleX(0.943);transform-origin:0 0;">0</span></span><span style="display:inline-block;width:9.9px;"><span style="display:inline-block;transform:scaleX(0.943);transform-origin:0 0;">2</span></span><span style="display:inline-block;width:9.9px;"><span style="display:inline-block;transform:scaleX(0.943);transform-origin:0 0;">3</span></span></div><div style="left:973px;top:265.15px;font-size:14px;line-height:14px;font-family:'Liberation Sans', sans-serif;color:#f4f4f4;font-weight:normal;white-space:pre;">Battery operation mode:</div><div style="left:971px;top:292px;width:111px;height:23px;background:#c3c3c3;"></div><div style="left:971px;top:292.21px;font-size:21px;line-height:21px;font-family:'Liberation Serif', serif;color:#1a1a1a;font-weight:normal;white-space:pre;"><span style="display:inline-block;width:9.9px;"><span style="display:inline-block;transform:scaleX(0.772);transform-origin:0 0;">L</span></span><span style="display:inline-block;width:9.9px;"><span style="display:inline-block;transform:scaleX(0.943);transform-origin:0 0;">o</span></span><span style="display:inline-block;width:9.9px;"><span style="display:inline-block;transform:scaleX(0.943);transform-origin:0 0;">n</span></span><span style="display:inline-block;width:9.9px;"><span style="display:inline-block;transform:scaleX(0.943);transform-origin:0 0;">g</span></span><span style="display:inline-block;width:9.9px"></span><span style="display:inline-block;width:9.9px;"><span style="display:inline-block;transform:scaleX(0.943);transform-origin:0 0;">p</span></span><span style="display:inline-block;width:9.9px;text-align:center">r</span><span style="display:inline-block;width:9.9px;text-align:center">e</span><span style="display:inline-block;width:9.9px;text-align:center">s</span><span style="display:inline-block;width:9.9px;text-align:center">s</span></div><div style="left:1102px;top:289px;width:53px;height:26px;background:linear-gradient(#b7bdc5,#adb4bc 85%,#bcc2ca)"></div><div style="left:828.5px;width:600px;text-align:center;top:296.61px;font-size:11.8px;line-height:11.8px;font-family:'Liberation Sans', sans-serif;color:#000;font-weight:bold;white-space:pre;letter-spacing:-0.8px;-webkit-text-stroke:0.4px #000;">Read</div><div style="right:824px;text-align:right;top:339.65px;font-size:14px;line-height:14px;font-family:'Liberation Sans', sans-serif;color:#f4f4f4;font-weight:normal;white-space:pre;">Firmware Index No.:</div><div style="right:824px;text-align:right;top:368.65px;font-size:14px;line-height:14px;font-family:'Liberation Sans', sans-serif;color:#f4f4f4;font-weight:normal;white-space:pre;">Battery code:</div><div style="left:376px;top:334px;width:348px;height:23px;background:#c3c3c3;"></div><div style="left:376px;top:334.21px;font-size:21px;line-height:21px;font-family:'Liberation Serif', serif;color:#1a1a1a;font-weight:normal;white-space:pre;"><span style="display:inline-block;width:9.9px;"><span style="display:inline-block;transform:scaleX(0.943);transform-origin:0 0;">2</span></span><span style="display:inline-block;width:9.9px;"><span style="display:inline-block;transform:scaleX(0.943);transform-origin:0 0;">0</span></span><span style="display:inline-block;width:9.9px;"><span style="display:inline-block;transform:scaleX(0.943);transform-origin:0 0;">2</span></span><span style="display:inline-block;width:9.9px;"><span style="display:inline-block;transform:scaleX(0.943);transform-origin:0 0;">3</span></span><span style="display:inline-block;width:9.9px;"><span style="display:inline-block;transform:scaleX(0.943);transform-origin:0 0;">0</span></span><span style="display:inline-block;width:9.9px;"><span style="display:inline-block;transform:scaleX(0.943);transform-origin:0 0;">5</span></span><span style="display:inline-block;width:9.9px;"><span style="display:inline-block;transform:scaleX(0.943);transform-origin:0 0;">2</span></span><span style="display:inline-block;width:9.9px;"><span style="display:inline-block;transform:scaleX(0.943);transform-origin:0 0;">0</span></span></div><div style="left:376px;top:367px;width:348px;height:23px;background:#c3c3c3;"></div><div style="left:376px;top:367.21px;font-size:21px;line-height:21px;font-family:'Liberation Serif', serif;color:#1a1a1a;font-weight:normal;white-space:pre;"><span style="display:inline-block;width:9.9px;"><span style="display:inline-block;transform:scaleX(0.943);transform-origin:0 0;">2</span></span><span style="display:inline-block;width:9.9px;"><span style="display:inline-block;transform:scaleX(0.943);transform-origin:0 0;">0</span></span><span style="display:inline-block;width:9.9px;"><span style="display:inline-block;transform:scaleX(0.943);transform-origin:0 0;">2</span></span><span style="display:inline-block;width:9.9px;"><span style="display:inline-block;transform:scaleX(0.943);transform-origin:0 0;">3</span></span><span style="display:inline-block;width:9.9px;"><span style="display:inline-block;transform:scaleX(0.943);transform-origin:0 0;">0</span></span><span style="display:inline-block;width:9.9px;"><span style="display:inline-block;transform:scaleX(0.943);transform-origin:0 0;">5</span></span><span style="display:inline-block;width:9.9px;"><span style="display:inline-block;transform:scaleX(0.943);transform-origin:0 0;">2</span></span><span style="display:inline-block;width:9.9px;"><span style="display:inline-block;transform:scaleX(0.943);transform-origin:0 0;">0</span></span></div><div style="left:731px;top:332px;width:52px;height:26px;background:linear-gradient(#b7bdc5,#adb4bc 85%,#bcc2ca)"></div><div style="left:457.0px;width:600px;text-align:center;top:339.61px;font-size:11.8px;line-height:11.8px;font-family:'Liberation Sans', sans-serif;color:#000;font-weight:bold;white-space:pre;letter-spacing:-0.8px;-webkit-text-stroke:0.4px #000;">Read</div><div style="left:731px;top:365px;width:52px;height:26px;background:linear-gradient(#b7bdc5,#adb4bc 85%,#bcc2ca)"></div><div style="left:457.0px;width:600px;text-align:center;top:372.61px;font-size:11.8px;line-height:11.8px;font-family:'Liberation Sans', sans-serif;color:#000;font-weight:bold;white-space:pre;letter-spacing:-0.8px;-webkit-text-stroke:0.4px #000;">Read</div><div style="right:358px;text-align:right;top:336.15px;font-size:14px;line-height:14px;font-family:'Liberation Sans', sans-serif;color:#f4f4f4;font-weight:normal;white-space:pre;">RTC:</div><div style="right:358px;text-align:right;top:370.15px;font-size:14px;line-height:14px;font-family:'Liberation Sans', sans-serif;color:#f4f4f4;font-weight:normal;white-space:pre;">IP:</div><div style="left:844px;top:332px;width:247px;height:23px;background:#c3c3c3;"></div><div style="left:844px;top:332.21px;font-size:21px;line-height:21px;font-family:'Liberation Serif', serif;color:#1a1a1a;font-weight:normal;white-space:pre;"><span style="display:inline-block;width:9.9px;"><span style="display:inline-block;transform:scaleX(0.943);transform-origin:0 0;">2</span></span><span style="display:inline-block;width:9.9px;"><span style="display:inline-block;transform:scaleX(0.943);transform-origin:0 0;">0</span></span><span style="display:inline-block;width:9.9px;"><span style="display:inline-block;transform:scaleX(0.943);transform-origin:0 0;">2</span></span><span style="display:inline-block;width:9.9px;"><span style="display:inline-block;transform:scaleX(0.943);transform-origin:0 0;">3</span></span><span style="display:inline-block;width:9.9px;text-align:center">/</span><span style="display:inline-block;width:9.9px;"><span style="display:inline-block;transform:scaleX(0.943);transform-origin:0 0;">1</span></span><span style="display:inline-block;width:9.9px;"><span style="display:inline-block;transform:scaleX(0.943);transform-origin:0 0;">0</span></span><span style="display:inline-block;width:9.9px;text-align:center">/</span><span style="display:inline-block;width:9.9px;"><span style="display:inline-block;transform:scaleX(0.943);transform-origin:0 0;">2</span></span><span style="display:inline-block;width:9.9px;"><span style="display:inline-block;transform:scaleX(0.943);transform-origin:0 0;">6</span></span><span style="display:inline-block;width:9.9px"></span><span style="display:inline-block;width:9.9px;"><span style="display:inline-block;transform:scaleX(0.943);transform-origin:0 0;">9</span></span><span style="display:inline-block;width:9.9px;text-align:center">:</span><span style="display:inline-block;width:9.9px;"><span style="display:inline-block;transform:scaleX(0.943);transform-origin:0 0;">4</span></span><span style="display:inline-block;width:9.9px;"><span style="display:inline-block;transform:scaleX(0.943);transform-origin:0 0;">9</span></span><span style="display:inline-block;width:9.9px;text-align:center">:</span><span style="display:inline-block;width:9.9px;"><span style="display:inline-block;transform:scaleX(0.943);transform-origin:0 0;">5</span></span><span style="display:inline-block;width:9.9px;"><span style="display:inline-block;transform:scaleX(0.943);transform-origin:0 0;">0</span></span></div><div style="left:844px;top:366px;width:247px;height:23px;background:#c3c3c3;"></div><div style="left:1097px;top:331px;width:53px;height:26px;background:linear-gradient(#b7bdc5,#adb4bc 85%,#bcc2ca)"></div><div style="left:823.5px;width:600px;text-align:center;top:338.61px;font-size:11.8px;line-height:11.8px;font-family:'Liberation Sans', sans-serif;color:#000;font-weight:bold;white-space:pre;letter-spacing:-0.8px;-webkit-text-stroke:0.4px #000;">Read</div><div style="left:1097px;top:365px;width:53px;height:26px;background:linear-gradient(#b7bdc5,#adb4bc 85%,#bcc2ca)"></div><div style="left:823.5px;width:600px;text-align:center;top:372.61px;font-size:11.8px;line-height:11.8px;font-family:'Liberation Sans', sans-serif;color:#000;font-weight:bold;white-space:pre;letter-spacing:-0.8px;-webkit-text-stroke:0.4px #000;">Read</div><div style="right:823.5px;text-align:right;top:418.15px;font-size:14px;line-height:14px;font-family:'Liberation Sans', sans-serif;color:#f4f4f4;font-weight:normal;white-space:pre;">BMS SW version:</div><div style="right:823.5px;text-align:right;top:451.15px;font-size:14px;line-height:14px;font-family:'Liberation Sans', sans-serif;color:#f4f4f4;font-weight:normal;white-space:pre;">WNT SW version:</div><div style="left:380px;top:413px;width:220px;height:23px;background:#c3c3c3;"></div><div style="left:380px;top:413.21px;font-size:21px;line-height:21px;font-family:'Liberation Serif', serif;color:#1a1a1a;font-weight:normal;white-space:pre;"><span style="display:inline-block;width:9.9px;"><span style="display:inline-block;transform:scaleX(0.943);transform-origin:0 0;">1</span></span><span style="display:inline-block;width:9.9px;"><span style="display:inline-block;transform:scaleX(0.943);transform-origin:0 0;">1</span></span><span style="display:inline-block;width:9.9px;"><span style="display:inline-block;transform:scaleX(0.943);transform-origin:0 0;">_</span></span><span style="display:inline-block;width:9.9px;"><span style="display:inline-block;transform:scaleX(0.943);transform-origin:0 0;">2</span></span><span style="display:inline-block;width:9.9px;"><span style="display:inline-block;transform:scaleX(0.943);transform-origin:0 0;">3</span></span><span style="display:inline-block;width:9.9px;"><span style="display:inline-block;transform:scaleX(0.943);transform-origin:0 0;">0</span></span><span style="display:inline-block;width:9.9px;"><span style="display:inline-block;transform:scaleX(0.943);transform-origin:0 0;">9</span></span><span style="display:inline-block;width:9.9px;"><span style="display:inline-block;transform:scaleX(0.943);transform-origin:0 0;">1</span></span><span style="display:inline-block;width:9.9px;"><span style="display:inline-block;transform:scaleX(0.943);transform-origin:0 0;">4</span></span><span style="display:inline-block;width:9.9px;"><span style="display:inline-block;transform:scaleX(0.943);transform-origin:0 0;">_</span></span><span style="display:inline-block;width:9.9px;text-align:center">I</span><span style="display:inline-block;width:9.9px;"><span style="display:inline-block;transform:scaleX(0.653);transform-origin:0 0;">N</span></span><span style="display:inline-block;width:9.9px;"><span style="display:inline-block;transform:scaleX(0.653);transform-origin:0 0;">V</span></span><span style="display:inline-block;width:9.9px;"><span style="display:inline-block;transform:scaleX(0.772);transform-origin:0 0;">T</span></span></div><div style="left:380px;top:448px;width:220px;height:23px;background:#c3c3c3;"></div><div style="left:608px;top:411px;width:52px;height:25px;background:linear-gradient(#b7bdc5,#adb4bc 85%,#bcc2ca)"></div><div style="left:334.0px;width:600px;text-align:center;top:418.11px;font-size:11.8px;line-height:11.8px;font-family:'Liberation Sans', sans-serif;color:#000;font-weight:bold;white-space:pre;letter-spacing:-0.8px;-webkit-text-stroke:0.4px #000;">Read</div><div style="right:369px;text-align:right;top:417.15px;font-size:14px;line-height:14px;font-family:'Liberation Sans', sans-serif;color:#f4f4f4;font-weight:normal;white-space:pre;">BMS HD version:</div><div style="right:369px;text-align:right;top:449.15px;font-size:14px;line-height:14px;font-family:'Liberation Sans', sans-serif;color:#f4f4f4;font-weight:normal;white-space:pre;">WNT HD version:</div><div style="left:832px;top:413px;width:220px;height:23px;background:#c3c3c3;"></div><div style="left:832px;top:413.21px;font-size:21px;line-height:21px;font-family:'Liberation Serif', serif;color:#1a1a1a;font-weight:normal;white-space:pre;"><span style="display:inline-block;width:9.9px;"><span style="display:inline-block;transform:scaleX(0.707);transform-origin:0 0;">B</span></span><span style="display:inline-block;width:9.9px;"><span style="display:inline-block;transform:scaleX(0.530);transform-origin:0 0;">M</span></span><span style="display:inline-block;width:9.9px;"><span style="display:inline-block;transform:scaleX(0.848);transform-origin:0 0;">S</span></span><span style="display:inline-block;width:9.9px;text-align:center">-</span><span style="display:inline-block;width:9.9px;"><span style="display:inline-block;transform:scaleX(0.848);transform-origin:0 0;">S</span></span><span style="display:inline-block;width:9.9px;"><span style="display:inline-block;transform:scaleX(0.772);transform-origin:0 0;">T</span></span><span style="display:inline-block;width:9.9px;"><span style="display:inline-block;transform:scaleX(0.943);transform-origin:0 0;">1</span></span><span style="display:inline-block;width:9.9px;"><span style="display:inline-block;transform:scaleX(0.943);transform-origin:0 0;">0</span></span><span style="display:inline-block;width:9.9px;"><span style="display:inline-block;transform:scaleX(0.943);transform-origin:0 0;">3</span></span><span style="display:inline-block;width:9.9px;text-align:center">-</span><span style="display:inline-block;width:9.9px;"><span style="display:inline-block;transform:scaleX(0.943);transform-origin:0 0;">3</span></span><span style="display:inline-block;width:9.9px;"><span style="display:inline-block;transform:scaleX(0.943);transform-origin:0 0;">0</span></span><span style="display:inline-block;width:9.9px;"><span style="display:inline-block;transform:scaleX(0.943);transform-origin:0 0;">9</span></span><span style="display:inline-block;width:9.9px;"><span style="display:inline-block;transform:scaleX(0.772);transform-origin:0 0;">E</span></span></div><div style="left:832px;top:447px;width:220px;height:23px;background:#c3c3c3;"></div><div style="left:1060px;top:410px;width:53px;height:26px;background:linear-gradient(#b7bdc5,#adb4bc 85%,#bcc2ca)"></div><div style="left:786.5px;width:600px;text-align:center;top:417.61px;font-size:11.8px;line-height:11.8px;font-family:'Liberation Sans', sans-serif;color:#000;font-weight:bold;white-space:pre;letter-spacing:-0.8px;-webkit-text-stroke:0.4px #000;">Read</div><div style="left:244px;top:489px;width:40px;height:56px;background:#7a7a7a;"></div><div style="left:-37.5px;width:600px;text-align:center;top:510.30px;font-size:15px;line-height:15px;font-family:'Liberation Sans', sans-serif;color:#fff;font-weight:normal;white-space:pre;">Lev</div><div style="left:244px;top:546px;width:40px;height:23px;background:#7878fc;"></div><div style="left:244px;top:570px;width:40px;height:23px;background:#7878fc;"></div><div style="left:244px;top:594px;width:40px;height:26px;background:#7a7a7a;"></div><svg style="left:244px;top:546px" width="40" height="74"><g fill="none" stroke="#fff" stroke-width="1.1"><circle cx="18.5" cy="13.2" r="6.3"/><circle cx="18.5" cy="37.2" r="6.3"/><path d="M10.5 61.7 H25 M20 57.5 L27.5 61.7 L20 66" stroke-width="1.2"/></g><text x="18.5" y="16.8" font-size="10" text-anchor="middle" fill="#fff" font-family="'Liberation Sans', sans-serif">1</text><text x="18.5" y="40.8" font-size="10" text-anchor="middle" fill="#fff" font-family="'Liberation Sans', sans-serif">2</text></svg><div style="left:285px;top:489px;width:61px;height:56px;background:#7a7a7a;"></div><div style="left:15.5px;width:600px;text-align:center;top:505.12px;font-size:12.5px;line-height:12.5px;font-family:'Liberation Sans', sans-serif;color:#f4f4f4;font-weight:normal;white-space:pre;">cell volt</div><div style="left:15.5px;width:600px;text-align:center;top:520.12px;font-size:12.5px;line-height:12.5px;font-family:'Liberation Sans', sans-serif;color:#f4f4f4;font-weight:normal;white-space:pre;">high</div><div style="left:285px;top:546px;width:61px;height:23px;background:#c3c3c3;"></div><div style="left:285px;top:546.21px;font-size:21px;line-height:21px;font-family:'Liberation Serif', serif;color:#1a1a1a;font-weight:normal;white-space:pre;"><span style="display:inline-block;width:9.9px;"><span style="display:inline-block;transform:scaleX(0.943);transform-origin:0 0;">3</span></span><span style="display:inline-block;width:9.9px;text-align:left">,</span><span style="display:inline-block;width:9.9px;"><span style="display:inline-block;transform:scaleX(0.943);transform-origin:0 0;">3</span></span><span style="display:inline-block;width:9.9px;"><span style="display:inline-block;transform:scaleX(0.943);transform-origin:0 0;">5</span></span></div><div style="left:285px;top:570px;width:61px;height:23px;background:#c3c3c3;"></div><div style="left:285px;top:570.21px;font-size:21px;line-height:21px;font-family:'Liberation Serif', serif;color:#1a1a1a;font-weight:normal;white-space:pre;"><span style="display:inline-block;width:9.9px;"><span style="display:inline-block;transform:scaleX(0.943);transform-origin:0 0;">3</span></span><span style="display:inline-block;width:9.9px;text-align:left">,</span><span style="display:inline-block;width:9.9px;"><span style="display:inline-block;transform:scaleX(0.943);transform-origin:0 0;">4</span></span><span style="display:inline-block;width:9.9px;"><span style="display:inline-block;transform:scaleX(0.943);transform-origin:0 0;">5</span></span></div><div style="left:348px;top:489px;width:61px;height:56px;background:#7a7a7a;"></div><div style="left:78.5px;width:600px;text-align:center;top:505.12px;font-size:12.5px;line-height:12.5px;font-family:'Liberation Sans', sans-serif;color:#f4f4f4;font-weight:normal;white-space:pre;">cell volt</div><div style="left:78.5px;width:600px;text-align:center;top:520.12px;font-size:12.5px;line-height:12.5px;font-family:'Liberation Sans', sans-serif;color:#f4f4f4;font-weight:normal;white-space:pre;">low</div><div style="left:348px;top:546px;width:61px;height:23px;background:#c3c3c3;"></div><div style="left:348px;top:546.21px;font-size:21px;line-height:21px;font-family:'Liberation Serif', serif;color:#1a1a1a;font-weight:normal;white-space:pre;"><span style="display:inline-block;width:9.9px;"><span style="display:inline-block;transform:scaleX(0.943);transform-origin:0 0;">3</span></span><span style="display:inline-block;width:9.9px;text-align:left">,</span><span style="display:inline-block;width:9.9px;"><span style="display:inline-block;transform:scaleX(0.943);transform-origin:0 0;">1</span></span></div><div style="left:348px;top:570px;width:61px;height:23px;background:#c3c3c3;"></div><div style="left:348px;top:570.21px;font-size:21px;line-height:21px;font-family:'Liberation Serif', serif;color:#1a1a1a;font-weight:normal;white-space:pre;"><span style="display:inline-block;width:9.9px;"><span style="display:inline-block;transform:scaleX(0.943);transform-origin:0 0;">3</span></span></div><div style="left:411px;top:489px;width:61px;height:56px;background:#7a7a7a;"></div><div style="left:141.5px;width:600px;text-align:center;top:505.12px;font-size:12.5px;line-height:12.5px;font-family:'Liberation Sans', sans-serif;color:#f4f4f4;font-weight:normal;white-space:pre;">sum volt</div><div style="left:141.5px;width:600px;text-align:center;top:520.12px;font-size:12.5px;line-height:12.5px;font-family:'Liberation Sans', sans-serif;color:#f4f4f4;font-weight:normal;white-space:pre;">high</div><div style="left:411px;top:546px;width:61px;height:23px;background:#c3c3c3;"></div><div style="left:411px;top:546.21px;font-size:21px;line-height:21px;font-family:'Liberation Serif', serif;color:#1a1a1a;font-weight:normal;white-space:pre;"><span style="display:inline-block;width:9.9px;"><span style="display:inline-block;transform:scaleX(0.943);transform-origin:0 0;">5</span></span><span style="display:inline-block;width:9.9px;"><span style="display:inline-block;transform:scaleX(0.943);transform-origin:0 0;">8</span></span><span style="display:inline-block;width:9.9px;text-align:left">,</span><span style="display:inline-block;width:9.9px;"><span style="display:inline-block;transform:scaleX(0.943);transform-origin:0 0;">4</span></span></div><div style="left:411px;top:570px;width:61px;height:23px;background:#c3c3c3;"></div><div style="left:411px;top:570.21px;font-size:21px;line-height:21px;font-family:'Liberation Serif', serif;color:#1a1a1a;font-weight:normal;white-space:pre;"><span style="display:inline-block;width:9.9px;"><span style="display:inline-block;transform:scaleX(0.943);transform-origin:0 0;">5</span></span><span style="display:inline-block;width:9.9px;"><span style="display:inline-block;transform:scaleX(0.943);transform-origin:0 0;">5</span></span><span style="display:inline-block;width:9.9px;text-align:left">,</span><span style="display:inline-block;width:9.9px;"><span style="display:inline-block;transform:scaleX(0.943);transform-origin:0 0;">2</span></span></div><div style="left:474px;top:489px;width:61px;height:56px;background:#7a7a7a;"></div><div style="left:204.5px;width:600px;text-align:center;top:505.12px;font-size:12.5px;line-height:12.5px;font-family:'Liberation Sans', sans-serif;color:#f4f4f4;font-weight:normal;white-space:pre;">sum volt</div><div style="left:204.5px;width:600px;text-align:center;top:520.12px;font-size:12.5px;line-height:12.5px;font-family:'Liberation Sans', sans-serif;color:#f4f4f4;font-weight:normal;white-space:pre;">low</div><div style="left:474px;top:546px;width:61px;height:23px;background:#c3c3c3;"></div><div style="left:474px;top:546.21px;font-size:21px;line-height:21px;font-family:'Liberation Serif', serif;color:#1a1a1a;font-weight:normal;white-space:pre;"><span style="display:inline-block;width:9.9px;"><span style="display:inline-block;transform:scaleX(0.943);transform-origin:0 0;">3</span></span><span style="display:inline-block;width:9.9px;"><span style="display:inline-block;transform:scaleX(0.943);transform-origin:0 0;">6</span></span><span style="display:inline-block;width:9.9px;text-align:left">,</span><span style="display:inline-block;width:9.9px;"><span style="display:inline-block;transform:scaleX(0.943);transform-origin:0 0;">8</span></span></div><div style="left:474px;top:570px;width:61px;height:23px;background:#c3c3c3;"></div><div style="left:474px;top:570.21px;font-size:21px;line-height:21px;font-family:'Liberation Serif', serif;color:#1a1a1a;font-weight:normal;white-space:pre;"><span style="display:inline-block;width:9.9px;"><span style="display:inline-block;transform:scaleX(0.943);transform-origin:0 0;">4</span></span><span style="display:inline-block;width:9.9px;"><span style="display:inline-block;transform:scaleX(0.943);transform-origin:0 0;">8</span></span></div><div style="left:537px;top:489px;width:61px;height:56px;background:#7a7a7a;"></div><div style="left:267.5px;width:600px;text-align:center;top:505.12px;font-size:12.5px;line-height:12.5px;font-family:'Liberation Sans', sans-serif;color:#f4f4f4;font-weight:normal;white-space:pre;">discharge</div><div style="left:267.5px;width:600px;text-align:center;top:520.12px;font-size:12.5px;line-height:12.5px;font-family:'Liberation Sans', sans-serif;color:#f4f4f4;font-weight:normal;white-space:pre;">curr large</div><div style="left:537px;top:546px;width:61px;height:23px;background:#c3c3c3;"></div><div style="left:537px;top:546.21px;font-size:21px;line-height:21px;font-family:'Liberation Serif', serif;color:#1a1a1a;font-weight:normal;white-space:pre;"><span style="display:inline-block;width:9.9px;"><span style="display:inline-block;transform:scaleX(0.943);transform-origin:0 0;">3</span></span><span style="display:inline-block;width:9.9px;"><span style="display:inline-block;transform:scaleX(0.943);transform-origin:0 0;">0</span></span><span style="display:inline-block;width:9.9px;"><span style="display:inline-block;transform:scaleX(0.943);transform-origin:0 0;">0</span></span></div><div style="left:537px;top:570px;width:61px;height:23px;background:#c3c3c3;"></div><div style="left:537px;top:570.21px;font-size:21px;line-height:21px;font-family:'Liberation Serif', serif;color:#1a1a1a;font-weight:normal;white-space:pre;"><span style="display:inline-block;width:9.9px;"><span style="display:inline-block;transform:scaleX(0.943);transform-origin:0 0;">8</span></span><span style="display:inline-block;width:9.9px;"><span style="display:inline-block;transform:scaleX(0.943);transform-origin:0 0;">0</span></span></div><div style="left:600px;top:489px;width:61px;height:56px;background:#7a7a7a;"></div><div style="left:330.5px;width:600px;text-align:center;top:505.12px;font-size:12.5px;line-height:12.5px;font-family:'Liberation Sans', sans-serif;color:#f4f4f4;font-weight:normal;white-space:pre;">charge</div><div style="left:330.5px;width:600px;text-align:center;top:520.12px;font-size:12.5px;line-height:12.5px;font-family:'Liberation Sans', sans-serif;color:#f4f4f4;font-weight:normal;white-space:pre;">curr large</div><div style="left:600px;top:546px;width:61px;height:23px;background:#c3c3c3;"></div><div style="left:600px;top:546.21px;font-size:21px;line-height:21px;font-family:'Liberation Serif', serif;color:#1a1a1a;font-weight:normal;white-space:pre;"><span style="display:inline-block;width:9.9px;"><span style="display:inline-block;transform:scaleX(0.943);transform-origin:0 0;">3</span></span><span style="display:inline-block;width:9.9px;"><span style="display:inline-block;transform:scaleX(0.943);transform-origin:0 0;">0</span></span><span style="display:inline-block;width:9.9px;"><span style="display:inline-block;transform:scaleX(0.943);transform-origin:0 0;">0</span></span></div><div style="left:600px;top:570px;width:61px;height:23px;background:#c3c3c3;"></div><div style="left:600px;top:570.21px;font-size:21px;line-height:21px;font-family:'Liberation Serif', serif;color:#1a1a1a;font-weight:normal;white-space:pre;"><span style="display:inline-block;width:9.9px;"><span style="display:inline-block;transform:scaleX(0.943);transform-origin:0 0;">4</span></span><span style="display:inline-block;width:9.9px;"><span style="display:inline-block;transform:scaleX(0.943);transform-origin:0 0;">5</span></span></div><div style="left:663px;top:489px;width:61px;height:56px;background:#7a7a7a;"></div><div style="left:393.5px;width:600px;text-align:center;top:505.12px;font-size:12.5px;line-height:12.5px;font-family:'Liberation Sans', sans-serif;color:#f4f4f4;font-weight:normal;white-space:pre;">volt diff</div><div style="left:393.5px;width:600px;text-align:center;top:520.12px;font-size:12.5px;line-height:12.5px;font-family:'Liberation Sans', sans-serif;color:#f4f4f4;font-weight:normal;white-space:pre;">large</div><div style="left:663px;top:546px;width:61px;height:23px;background:#c3c3c3;"></div><div style="left:663px;top:546.21px;font-size:21px;line-height:21px;font-family:'Liberation Serif', serif;color:#1a1a1a;font-weight:normal;white-space:pre;"><span style="display:inline-block;width:9.9px;"><span style="display:inline-block;transform:scaleX(0.943);transform-origin:0 0;">0</span></span><span style="display:inline-block;width:9.9px;text-align:left">,</span><span style="display:inline-block;width:9.9px;"><span style="display:inline-block;transform:scaleX(0.943);transform-origin:0 0;">5</span></span></div><div style="left:663px;top:570px;width:61px;height:23px;background:#c3c3c3;"></div><div style="left:663px;top:570.21px;font-size:21px;line-height:21px;font-family:'Liberation Serif', serif;color:#1a1a1a;font-weight:normal;white-space:pre;"><span style="display:inline-block;width:9.9px;"><span style="display:inline-block;transform:scaleX(0.943);transform-origin:0 0;">0</span></span><span style="display:inline-block;width:9.9px;text-align:left">,</span><span style="display:inline-block;width:9.9px;"><span style="display:inline-block;transform:scaleX(0.943);transform-origin:0 0;">2</span></span></div><div style="left:726px;top:489px;width:61px;height:56px;background:#7a7a7a;"></div><div style="left:456.5px;width:600px;text-align:center;top:505.12px;font-size:12.5px;line-height:12.5px;font-family:'Liberation Sans', sans-serif;color:#f4f4f4;font-weight:normal;white-space:pre;">temp diff</div><div style="left:456.5px;width:600px;text-align:center;top:520.12px;font-size:12.5px;line-height:12.5px;font-family:'Liberation Sans', sans-serif;color:#f4f4f4;font-weight:normal;white-space:pre;">large</div><div style="left:726px;top:546px;width:61px;height:23px;background:#c3c3c3;"></div><div style="left:726px;top:546.21px;font-size:21px;line-height:21px;font-family:'Liberation Serif', serif;color:#1a1a1a;font-weight:normal;white-space:pre;"><span style="display:inline-block;width:9.9px;"><span style="display:inline-block;transform:scaleX(0.943);transform-origin:0 0;">1</span></span><span style="display:inline-block;width:9.9px;"><span style="display:inline-block;transform:scaleX(0.943);transform-origin:0 0;">0</span></span></div><div style="left:726px;top:570px;width:61px;height:23px;background:#c3c3c3;"></div><div style="left:726px;top:570.21px;font-size:21px;line-height:21px;font-family:'Liberation Serif', serif;color:#1a1a1a;font-weight:normal;white-space:pre;"><span style="display:inline-block;width:9.9px;"><span style="display:inline-block;transform:scaleX(0.943);transform-origin:0 0;">1</span></span><span style="display:inline-block;width:9.9px;"><span style="display:inline-block;transform:scaleX(0.943);transform-origin:0 0;">5</span></span></div><div style="left:789px;top:489px;width:61px;height:56px;background:#7a7a7a;"></div><div style="left:519.5px;width:600px;text-align:center;top:512.62px;font-size:12.5px;line-height:12.5px;font-family:'Liberation Sans', sans-serif;color:#f4f4f4;font-weight:normal;white-space:pre;">SOC high</div><div style="left:789px;top:546px;width:61px;height:23px;background:#c3c3c3;"></div><div style="left:789px;top:546.21px;font-size:21px;line-height:21px;font-family:'Liberation Serif', serif;color:#1a1a1a;font-weight:normal;white-space:pre;"><span style="display:inline-block;width:9.9px;"><span style="display:inline-block;transform:scaleX(0.943);transform-origin:0 0;">1</span></span><span style="display:inline-block;width:9.9px;"><span style="display:inline-block;transform:scaleX(0.943);transform-origin:0 0;">0</span></span><span style="display:inline-block;width:9.9px;"><span style="display:inline-block;transform:scaleX(0.943);transform-origin:0 0;">0</span></span></div><div style="left:789px;top:570px;width:61px;height:23px;background:#c3c3c3;"></div><div style="left:789px;top:570.21px;font-size:21px;line-height:21px;font-family:'Liberation Serif', serif;color:#1a1a1a;font-weight:normal;white-space:pre;"><span style="display:inline-block;width:9.9px;"><span style="display:inline-block;transform:scaleX(0.943);transform-origin:0 0;">1</span></span><span style="display:inline-block;width:9.9px;"><span style="display:inline-block;transform:scaleX(0.943);transform-origin:0 0;">0</span></span><span style="display:inline-block;width:9.9px;"><span style="display:inline-block;transform:scaleX(0.943);transform-origin:0 0;">0</span></span></div><div style="left:852px;top:489px;width:61px;height:56px;background:#7a7a7a;"></div><div style="left:582.5px;width:600px;text-align:center;top:512.62px;font-size:12.5px;line-height:12.5px;font-family:'Liberation Sans', sans-serif;color:#f4f4f4;font-weight:normal;white-space:pre;">SOC low</div><div style="left:852px;top:546px;width:61px;height:23px;background:#c3c3c3;"></div><div style="left:852px;top:546.21px;font-size:21px;line-height:21px;font-family:'Liberation Serif', serif;color:#1a1a1a;font-weight:normal;white-space:pre;"><span style="display:inline-block;width:9.9px;"><span style="display:inline-block;transform:scaleX(0.943);transform-origin:0 0;">2</span></span><span style="display:inline-block;width:9.9px;"><span style="display:inline-block;transform:scaleX(0.943);transform-origin:0 0;">0</span></span></div><div style="left:852px;top:570px;width:61px;height:23px;background:#c3c3c3;"></div><div style="left:852px;top:570.21px;font-size:21px;line-height:21px;font-family:'Liberation Serif', serif;color:#1a1a1a;font-weight:normal;white-space:pre;"><span style="display:inline-block;width:9.9px;"><span style="display:inline-block;transform:scaleX(0.943);transform-origin:0 0;">1</span></span><span style="display:inline-block;width:9.9px;"><span style="display:inline-block;transform:scaleX(0.943);transform-origin:0 0;">0</span></span></div><div style="left:915px;top:489px;width:61px;height:56px;background:#7a7a7a;"></div><div style="left:645.5px;width:600px;text-align:center;top:497.62px;font-size:12.5px;line-height:12.5px;font-family:'Liberation Sans', sans-serif;color:#f4f4f4;font-weight:normal;white-space:pre;">charge</div><div style="left:645.5px;width:600px;text-align:center;top:512.62px;font-size:12.5px;line-height:12.5px;font-family:'Liberation Sans', sans-serif;color:#f4f4f4;font-weight:normal;white-space:pre;">temp</div><div style="left:645.5px;width:600px;text-align:center;top:527.62px;font-size:12.5px;line-height:12.5px;font-family:'Liberation Sans', sans-serif;color:#f4f4f4;font-weight:normal;white-space:pre;">high</div><div style="left:915px;top:546px;width:61px;height:23px;background:#c3c3c3;"></div><div style="left:915px;top:546.21px;font-size:21px;line-height:21px;font-family:'Liberation Serif', serif;color:#1a1a1a;font-weight:normal;white-space:pre;"><span style="display:inline-block;width:9.9px;"><span style="display:inline-block;transform:scaleX(0.943);transform-origin:0 0;">4</span></span><span style="display:inline-block;width:9.9px;"><span style="display:inline-block;transform:scaleX(0.943);transform-origin:0 0;">0</span></span></div><div style="left:915px;top:570px;width:61px;height:23px;background:#c3c3c3;"></div><div style="left:915px;top:570.21px;font-size:21px;line-height:21px;font-family:'Liberation Serif', serif;color:#1a1a1a;font-weight:normal;white-space:pre;"><span style="display:inline-block;width:9.9px;"><span style="display:inline-block;transform:scaleX(0.943);transform-origin:0 0;">4</span></span><span style="display:inline-block;width:9.9px;"><span style="display:inline-block;transform:scaleX(0.943);transform-origin:0 0;">0</span></span></div><div style="left:978px;top:489px;width:61px;height:56px;background:#7a7a7a;"></div><div style="left:708.5px;width:600px;text-align:center;top:505.12px;font-size:12.5px;line-height:12.5px;font-family:'Liberation Sans', sans-serif;color:#f4f4f4;font-weight:normal;white-space:pre;">charge</div><div style="left:708.5px;width:600px;text-align:center;top:520.12px;font-size:12.5px;line-height:12.5px;font-family:'Liberation Sans', sans-serif;color:#f4f4f4;font-weight:normal;white-space:pre;">temp low</div><div style="left:978px;top:546px;width:61px;height:23px;background:#c3c3c3;"></div><div style="left:978px;top:546.21px;font-size:21px;line-height:21px;font-family:'Liberation Serif', serif;color:#1a1a1a;font-weight:normal;white-space:pre;"><span style="display:inline-block;width:9.9px;"><span style="display:inline-block;transform:scaleX(0.943);transform-origin:0 0;">5</span></span></div><div style="left:978px;top:570px;width:61px;height:23px;background:#c3c3c3;"></div><div style="left:978px;top:570.21px;font-size:21px;line-height:21px;font-family:'Liberation Serif', serif;color:#1a1a1a;font-weight:normal;white-space:pre;"><span style="display:inline-block;width:9.9px;"><span style="display:inline-block;transform:scaleX(0.943);transform-origin:0 0;">5</span></span></div><div style="left:1041px;top:489px;width:61px;height:56px;background:#7a7a7a;"></div><div style="left:771.5px;width:600px;text-align:center;top:497.62px;font-size:12.5px;line-height:12.5px;font-family:'Liberation Sans', sans-serif;color:#f4f4f4;font-weight:normal;white-space:pre;">discharge</div><div style="left:771.5px;width:600px;text-align:center;top:512.62px;font-size:12.5px;line-height:12.5px;font-family:'Liberation Sans', sans-serif;color:#f4f4f4;font-weight:normal;white-space:pre;">temp</div><div style="left:771.5px;width:600px;text-align:center;top:527.62px;font-size:12.5px;line-height:12.5px;font-family:'Liberation Sans', sans-serif;color:#f4f4f4;font-weight:normal;white-space:pre;">high</div><div style="left:1041px;top:546px;width:61px;height:23px;background:#c3c3c3;"></div><div style="left:1041px;top:546.21px;font-size:21px;line-height:21px;font-family:'Liberation Serif', serif;color:#1a1a1a;font-weight:normal;white-space:pre;"><span style="display:inline-block;width:9.9px;"><span style="display:inline-block;transform:scaleX(0.943);transform-origin:0 0;">4</span></span><span style="display:inline-block;width:9.9px;"><span style="display:inline-block;transform:scaleX(0.943);transform-origin:0 0;">0</span></span></div><div style="left:1041px;top:570px;width:61px;height:23px;background:#c3c3c3;"></div><div style="left:1041px;top:570.21px;font-size:21px;line-height:21px;font-family:'Liberation Serif', serif;color:#1a1a1a;font-weight:normal;white-space:pre;"><span style="display:inline-block;width:9.9px;"><span style="display:inline-block;transform:scaleX(0.943);transform-origin:0 0;">4</span></span><span style="display:inline-block;width:9.9px;"><span style="display:inline-block;transform:scaleX(0.943);transform-origin:0 0;">0</span></span></div><div style="left:1104px;top:489px;width:61px;height:56px;background:#7a7a7a;"></div><div style="left:834.5px;width:600px;text-align:center;top:505.12px;font-size:12.5px;line-height:12.5px;font-family:'Liberation Sans', sans-serif;color:#f4f4f4;font-weight:normal;white-space:pre;">discharge</div><div style="left:834.5px;width:600px;text-align:center;top:520.12px;font-size:12.5px;line-height:12.5px;font-family:'Liberation Sans', sans-serif;color:#f4f4f4;font-weight:normal;white-space:pre;">temp low</div><div style="left:1104px;top:546px;width:61px;height:23px;background:#c3c3c3;"></div><div style="left:1104px;top:546.21px;font-size:21px;line-height:21px;font-family:'Liberation Serif', serif;color:#1a1a1a;font-weight:normal;white-space:pre;"><span style="display:inline-block;width:9.9px;"><span style="display:inline-block;transform:scaleX(0.943);transform-origin:0 0;">5</span></span></div><div style="left:1104px;top:570px;width:61px;height:23px;background:#c3c3c3;"></div><div style="left:1104px;top:570.21px;font-size:21px;line-height:21px;font-family:'Liberation Serif', serif;color:#1a1a1a;font-weight:normal;white-space:pre;"><span style="display:inline-block;width:9.9px;"><span style="display:inline-block;transform:scaleX(0.943);transform-origin:0 0;">5</span></span></div><div style="left:285px;top:594px;width:61px;height:26px;background:linear-gradient(#b7bdc5,#adb4bc 85%,#bcc2ca)"></div><div style="left:15.5px;width:600px;text-align:center;top:601.61px;font-size:11.8px;line-height:11.8px;font-family:'Liberation Sans', sans-serif;color:#000;font-weight:bold;white-space:pre;letter-spacing:-0.8px;-webkit-text-stroke:0.4px #000;">Read</div><div style="left:411px;top:594px;width:61px;height:26px;background:linear-gradient(#b7bdc5,#adb4bc 85%,#bcc2ca)"></div><div style="left:141.5px;width:600px;text-align:center;top:601.61px;font-size:11.8px;line-height:11.8px;font-family:'Liberation Sans', sans-serif;color:#000;font-weight:bold;white-space:pre;letter-spacing:-0.8px;-webkit-text-stroke:0.4px #000;">Read</div><div style="left:537px;top:594px;width:61px;height:26px;background:linear-gradient(#b7bdc5,#adb4bc 85%,#bcc2ca)"></div><div style="left:267.5px;width:600px;text-align:center;top:601.61px;font-size:11.8px;line-height:11.8px;font-family:'Liberation Sans', sans-serif;color:#000;font-weight:bold;white-space:pre;letter-spacing:-0.8px;-webkit-text-stroke:0.4px #000;">Read</div><div style="left:663px;top:594px;width:61px;height:26px;background:linear-gradient(#b7bdc5,#adb4bc 85%,#bcc2ca)"></div><div style="left:393.5px;width:600px;text-align:center;top:601.61px;font-size:11.8px;line-height:11.8px;font-family:'Liberation Sans', sans-serif;color:#000;font-weight:bold;white-space:pre;letter-spacing:-0.8px;-webkit-text-stroke:0.4px #000;">Read</div><div style="left:789px;top:594px;width:61px;height:26px;background:linear-gradient(#b7bdc5,#adb4bc 85%,#bcc2ca)"></div><div style="left:519.5px;width:600px;text-align:center;top:601.61px;font-size:11.8px;line-height:11.8px;font-family:'Liberation Sans', sans-serif;color:#000;font-weight:bold;white-space:pre;letter-spacing:-0.8px;-webkit-text-stroke:0.4px #000;">Read</div><div style="left:915px;top:594px;width:124px;height:26px;background:linear-gradient(#b7bdc5,#adb4bc 85%,#bcc2ca)"></div><div style="left:677.0px;width:600px;text-align:center;top:601.61px;font-size:11.8px;line-height:11.8px;font-family:'Liberation Sans', sans-serif;color:#000;font-weight:bold;white-space:pre;letter-spacing:-0.8px;-webkit-text-stroke:0.4px #000;">Read</div><div style="left:1061px;top:644px;width:117px;height:34px;background:linear-gradient(#b7bdc5,#adb4bc 85%,#bcc2ca)"></div><div style="left:819.5px;width:600px;text-align:center;top:655.61px;font-size:11.8px;line-height:11.8px;font-family:'Liberation Sans', sans-serif;color:#000;font-weight:bold;white-space:pre;letter-spacing:-0.8px;-webkit-text-stroke:0.4px #000;"></div><div style="left:819.5px;width:600px;text-align:center;top:654.27px;font-size:14px;line-height:14px;font-family:'Liberation Mono', monospace;color:#000;font-weight:normal;white-space:pre;transform:scaleX(0.821);">Read All</div>
</body></html>
